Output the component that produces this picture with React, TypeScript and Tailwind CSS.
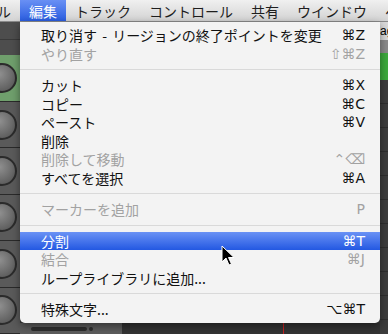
import React from "react";

type Item =
  | { sep: true }
  | { label: React.ReactNode; key?: string; disabled?: boolean; active?: boolean };

const items: Item[] = [
  {
    label: (
      <>
        取り消す <span className="mx-[2px]">-</span> リージョンの終了ポイントを変更
      </>
    ),
    key: "⌘Z",
  },
  { label: "やり直す", key: "⇧⌘Z", disabled: true },
  { sep: true },
  { label: "カット", key: "⌘X" },
  { label: "コピー", key: "⌘C" },
  { label: "ペースト", key: "⌘V" },
  { label: "削除" },
  { label: "削除して移動", key: "⌃⌫", disabled: true },
  { label: "すべてを選択", key: "⌘A" },
  { sep: true },
  { label: "マーカーを追加", key: "P", disabled: true },
  { sep: true },
  { label: "分割", key: "⌘T", active: true },
  { label: "結合", key: "⌘J", disabled: true },
  { label: "ループライブラリに追加..." },
  { sep: true },
  { label: "特殊文字...", key: "⌥⌘T" },
];

const jp = { fontFamily: '"Noto Sans CJK JP", "DejaVu Sans", sans-serif' };
const keyFont = { fontFamily: '"DejaVu Sans", "Noto Sans CJK JP", sans-serif' };

function Knob({ green }: { green?: boolean }) {
  return (
    <div
      className={
        "h-[50px] flex items-center border-b border-[#2a2a2a] " +
        (green ? "bg-[#6f9f6c]" : "bg-[#5a5a5a]")
      }
    >
      <div className="w-[30px] h-[30px] shrink-0 -ml-[13px] rounded-full border-[2px] border-[#2b2b2b] bg-[radial-gradient(circle_at_40%_35%,#909090,#4e4e4e)]" />
      <span className="ml-[4px] text-[7px] text-[#bbb] mt-[14px]" style={jp}>
        R
      </span>
    </div>
  );
}

export default function App() {
  return (
    <div className="relative w-[388px] h-[334px] overflow-hidden bg-[#3a3a3a]" style={jp}>
      {/* menu bar */}
      <div className="h-[22px] flex items-stretch bg-[linear-gradient(#f0f0f0,#d3d3d3)] border-b border-[#8a8a8a] text-[14px] text-[#1e1e1e]">
        {["ル", "編集", "トラック", "コントロール", "共有", "ウインドウ", "ヘルプ"].map((m, i) => (
          <div
            key={m}
            className={
              "px-[9px] flex items-center leading-none whitespace-nowrap " +
              (i === 0 ? "-ml-[12px] " : "") +
              (i === 1 ? "bg-[linear-gradient(#6990f4,#2a5de0)] text-white" : "")
            }
          >
            {m}
          </div>
        ))}
      </div>

      {/* background app content */}
      <div className="flex h-[312px]">
        <div className="w-[20px] flex flex-col shrink-0">
          <div className="h-[36px] bg-[repeating-linear-gradient(#4d4d4d_0px,#4d4d4d_17px,#3a3a3a_17px,#3a3a3a_18px)]" />
          <Knob green />
          <Knob />
          <Knob />
          <Knob />
          <Knob />
          <Knob />
        </div>
        <div className="flex-1 flex flex-col">
          <div className="flex-1" />
          <div className="h-[11px] flex">
            <div className="w-[102px] bg-[#5c5c5c] flex items-center pl-[11px]">
              <div className="w-[56px] h-[4px] bg-[#2e2e2e] rounded-sm" />
              <div className="w-[4px] h-[4px] ml-[2px] bg-[#2e2e2e] rounded-full" />
            </div>
            <div className="flex-1 bg-[#333] flex">
              <div className="w-[161px]" />
              <div className="w-[1px] bg-[#c62020]" />
            </div>
          </div>
        </div>
        <div className="w-[8px] flex flex-col shrink-0">
          <div className="h-[18px] bg-[#d9d9d9] text-[12px] leading-[18px] text-black overflow-hidden whitespace-nowrap" style={{ fontFamily: '"Liberation Sans", sans-serif' }}>
            ag
          </div>
          <div className="h-[13px] bg-[#8b8b8b]" />
          <div className="h-[27px] bg-[#3daa3d]" />
          <div className="flex-1 bg-[repeating-linear-gradient(#3c3c3c_0px,#3c3c3c_23px,#2e2e2e_23px,#2e2e2e_24px)]" />
        </div>
      </div>

      {/* dropdown menu */}
      <div className="absolute left-[20px] top-[22px] w-[360px] pt-[4px] pb-[4.5px] bg-[#f3f3f3] rounded-b-[5px] shadow-[0_3px_8px_rgba(0,0,0,0.45)] text-[14px]">
        {items.map((it, i) =>
          "sep" in it ? (
            <div key={i} className="h-[13px] flex items-center">
              <div className="w-full h-[1px] bg-[#d9d9d9]" />
            </div>
          ) : (
            <div
              key={i}
              className={
                "h-[18.5px] flex items-center justify-between pl-[21px] pr-[15px] leading-none whitespace-nowrap " +
                (it.active
                  ? "bg-[linear-gradient(#6a92f5,#2358e2)] text-white"
                  : it.disabled
                  ? "text-[#a2a2a2]"
                  : "text-[#111]")
              }
            >
              <span>{it.label}</span>
              {it.key && <span style={keyFont}>{it.key}</span>}
            </div>
          )
        )}
      </div>

      {/* mouse cursor */}
      <svg className="absolute left-[221px] top-[245px]" width="14" height="22" viewBox="0 0 14 22">
        <path d="M1 1 L1 17 L5 13 L8 20 L10.5 19 L7.5 12.5 L13 12.5 Z" fill="#000" stroke="#fff" strokeWidth="1" strokeLinejoin="round" />
      </svg>
    </div>
  );
}
